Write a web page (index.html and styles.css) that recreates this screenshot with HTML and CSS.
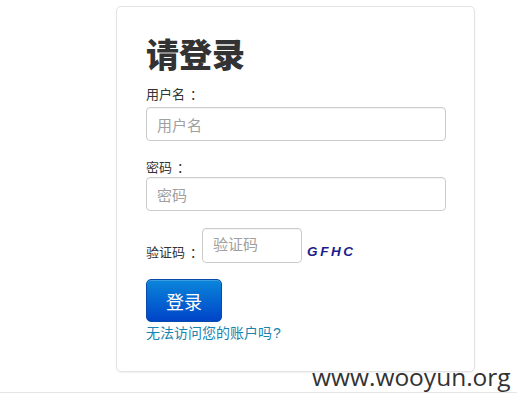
FILE: index.html
```html
<!DOCTYPE html>
<html lang="zh-CN">
<head>
<meta charset="utf-8">
<title>请登录</title>
<link rel="stylesheet" href="styles.css">
</head>
<body>
<div class="page">
  <form class="card">
    <h2 class="title">请登录</h2>
    <label class="label label-first">用户名<span class="colon">：</span></label>
    <input class="field" type="text" placeholder="用户名">
    <label class="label">密码<span class="colon">：</span></label>
    <input class="field" type="password" placeholder="密码">
    <div class="captcha-row">
      <label class="label captcha-label">验证码<span class="colon">：</span></label>
      <input class="field captcha-field" type="text" placeholder="验证码">
      <span class="captcha-code">GFHC</span>
    </div>
    <button class="btn" type="button">登录</button>
    <a class="help-link" href="#">无法访问您的账户吗<span class="qmark">?</span></a>
  </form>
  <div class="footer"></div>
  <div class="watermark">www.wooyun.org</div>
</div>
</body>
</html>
```
FILE: styles.css
```css
html, body {
  margin: 0;
  padding: 0;
  background: #fff;
}
body {
  font-family: "Liberation Sans", "Noto Sans CJK SC", sans-serif;
  color: #333;
}
.page {
  position: relative;
  width: 517px;
  height: 408px;
  overflow: hidden;
  padding-top: 6px;
  box-sizing: border-box;
}
.card {
  margin-left: 116px;
  width: 359px;
  height: 366px;
  box-sizing: border-box;
  border: 1px solid #e3e3e3;
  border-radius: 5px;
  box-shadow: 0 1px 2px rgba(0, 0, 0, 0.06);
  padding: 27px 28px 0 29px;
  display: flex;
  flex-direction: column;
  align-items: flex-start;
}
.title {
  margin: 0;
  font-size: 33px;
  line-height: 38px;
  font-weight: 900;
  color: #333;
  font-family: "Noto Sans CJK SC", sans-serif;
}
.label {
  display: block;
  font-size: 13px;
  line-height: 18px;
  color: #333;
  font-family: "Noto Sans CJK SC", sans-serif;
  margin-top: 17px;
  margin-bottom: 1px;
}
.colon {
  display: inline-block;
  margin-left: 5px;
  margin-right: -5px;
}
.label-first {
  margin-top: 13px;
  margin-bottom: 4px;
}
.field {
  width: 300px;
  height: 34px;
  box-sizing: border-box;
  border: 1px solid #ccc;
  border-radius: 4px;
  padding: 0 10px;
  font-size: 15px;
  font-family: "Noto Sans CJK SC", sans-serif;
  color: #555;
  box-shadow: inset 0 1px 1px rgba(0, 0, 0, 0.05);
  outline: none;
  margin: 0;
}
.field::placeholder {
  color: #a0a0a0;
}
.captcha-row {
  display: flex;
  align-items: flex-end;
  margin-top: 17px;
}
.captcha-label {
  margin: 0 4px 2px 0;
}
.captcha-field {
  width: 100px;
  height: 35px;
  padding-bottom: 4px;
}
.captcha-code {
  margin: 0 0 2px 5px;
  font-family: "Liberation Sans", sans-serif;
  font-weight: bold;
  font-style: italic;
  font-size: 13.5px;
  line-height: 18px;
  letter-spacing: 2.6px;
  color: #1b1b8c;
}
.btn {
  margin-top: 16px;
  width: 76px;
  height: 43px;
  border: 1px solid #0a4aa8;
  border-radius: 5px;
  background: linear-gradient(to bottom, #0a86da, #0044c8);
  color: #fff;
  font-size: 18px;
  font-family: "Noto Sans CJK SC", sans-serif;
  padding: 0;
  box-shadow: inset 0 1px 0 rgba(255, 255, 255, 0.2);
}
.help-link {
  margin-top: 1px;
  font-size: 14px;
  line-height: 18px;
  color: #1a84b0;
  text-decoration: none;
  font-family: "Noto Sans CJK SC", sans-serif;
}
.qmark {
  font-family: "Liberation Sans", sans-serif;
  margin-left: 1px;
}
.footer {
  margin-top: 20px;
  border-top: 1px solid #e6e6e6;
}
.watermark {
  position: absolute;
  left: 312px;
  top: 362px;
  font-family: "Open Sans", sans-serif;
  font-size: 24.5px;
  line-height: 30px;
  color: #333;
  white-space: nowrap;
}
```
